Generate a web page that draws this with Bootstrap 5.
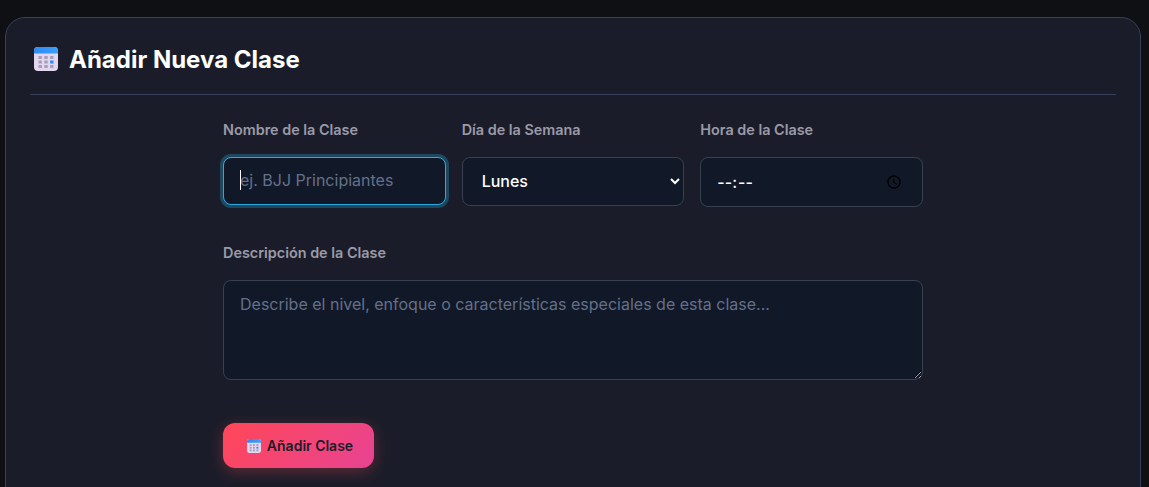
<!DOCTYPE html>
<html lang="es">
<head>
    <meta charset="UTF-8">
    <meta name="viewport" content="width=device-width, initial-scale=1.0">
    <title>Añadir Nueva Clase</title>
    <link href="https://cdn.jsdelivr.net/npm/bootstrap@5.3.0/dist/css/bootstrap.min.css" rel="stylesheet">
    <style>
        html, body { height: 487px; overflow: hidden; }
        body { background: #0f1014; font-family: "Inter", sans-serif; color: #fff; }
        .page-wrap { padding: 17px 8px 0 5px; height: 487px; overflow: hidden; }
        .panel {
            background: #1a1d29;
            border: 1px solid #374056;
            border-radius: 20px;
            padding: 24px 24px 0;
            height: 600px;
        }
        .panel-head {
            border-bottom: 1px solid #374056;
            height: 53px;
            padding-left: 4px;
            margin-bottom: 24px;
        }
        .panel-head h2 { font-size: 24px; font-weight: 700; line-height: 36px; margin: 0; color: #fff; }
        .cal-big { margin-top: 5px; margin-right: 3px; }
        .form-box { width: 700px; margin: 0 auto; }
        .field-grid { display: grid; grid-template-columns: repeat(3, 1fr); gap: 16px; align-items: start; }
        .field-label { display: block; font-size: 14.4px; font-weight: 600; line-height: 21px; color: #9a9aa8; margin-bottom: 17px; }
        .dark-input, .dark-input:focus {
            background-color: #111827;
            border: 1px solid #374151;
            border-radius: 8px;
            color: #fff;
            font-family: "Inter", sans-serif;
            font-size: 16px;
            padding: 11px 16px 13px;
            box-shadow: none;
        }
        .dark-input::placeholder { color: #64708b; opacity: 1; }
        .dark-input:focus { border-color: #29abe2; box-shadow: 0 0 0 3px rgba(41, 171, 226, .3); }
        .dark-text { height: 48px; }
        .dark-select { height: 49px; background-image: none; appearance: auto; font-weight: 500; padding-left: 15px; }
        .dark-time { height: 50px; font-weight: 500; padding: 12px 16px; }
        .dark-time::-webkit-datetime-edit-ampm-field { display: none; }
        textarea.dark-input { height: 100px; resize: vertical; }
        .field-wide { margin-top: 35px; }
        /* caret of the focused field, the headless shot does not paint it */
        .fake-caret { position: absolute; left: 17px; top: 13px; width: 1px; height: 20px; background: #fff; }
        .add-btn {
            display: inline-flex;
            align-items: center;
            gap: 6px;
            margin-top: 43px;
            height: 45px;
            width: 151px;
            justify-content: center;
            border: 0;
            border-radius: 12px;
            background: linear-gradient(135deg, #ff4757, #e84393);
            color: #1a1d29;
            font-size: 14px;
            font-weight: 600;
            padding-left: 9px;
            box-shadow: 0 4px 15px rgba(255, 71, 87, .3);
        }
    </style>
</head>
<body>
    <svg width="0" height="0" class="d-block">
        <defs>
            <linearGradient id="cal-top" x1="0" y1="0" x2="1" y2="0">
                <stop offset="0" stop-color="#2f8bf5"/>
                <stop offset="1" stop-color="#3aa0fb"/>
            </linearGradient>
            <symbol id="cal" viewBox="0 0 24 24">
                <rect x="0" y="0" width="24" height="24" rx="4" fill="#e3d6f0"/>
                <path d="M0 6.5V4A4 4 0 0 1 4 0h16a4 4 0 0 1 4 4v2.5z" fill="url(#cal-top)"/>
                <g fill="#a79fb8">
                    <rect x="4.5" y="9" width="3.4" height="3"/><rect x="10.3" y="9" width="3.4" height="3"/><rect x="16.1" y="9" width="3.4" height="3"/>
                    <rect x="4.5" y="13.5" width="3.4" height="3"/><rect x="10.3" y="13.5" width="3.4" height="3"/>
                    <rect x="4.5" y="18" width="3.4" height="3"/><rect x="10.3" y="18" width="3.4" height="3"/><rect x="16.1" y="18" width="3.4" height="3"/>
                </g>
                <rect x="16.1" y="13.5" width="3.4" height="3" fill="#2f8bf5"/>
            </symbol>
        </defs>
    </svg>

    <div class="page-wrap">
        <div class="panel">
            <div class="panel-head d-flex align-items-start gap-2">
                <svg width="24" height="24" class="flex-shrink-0 cal-big" aria-hidden="true"><use href="#cal"/></svg>
                <h2>Añadir Nueva Clase</h2>
            </div>

            <form class="form-box">
                <div class="field-grid">
                    <div>
                        <label class="field-label" for="nombre">Nombre de la Clase</label>
                        <div class="position-relative">
                            <input id="nombre" type="text" class="form-control dark-input dark-text" placeholder="ej. BJJ Principiantes" autofocus>
                            <span class="fake-caret"></span>
                        </div>
                    </div>
                    <div>
                        <label class="field-label" for="dia">Día de la Semana</label>
                        <select id="dia" class="form-select dark-input dark-select">
                            <option selected>Lunes</option>
                            <option>Martes</option>
                            <option>Miércoles</option>
                            <option>Jueves</option>
                            <option>Viernes</option>
                            <option>Sábado</option>
                            <option>Domingo</option>
                        </select>
                    </div>
                    <div>
                        <label class="field-label" for="hora">Hora de la Clase</label>
                        <input id="hora" type="time" class="form-control dark-input dark-time">
                    </div>
                </div>

                <div class="field-wide">
                    <label class="field-label" for="descripcion">Descripción de la Clase</label>
                    <textarea id="descripcion" class="form-control dark-input" placeholder="Describe el nivel, enfoque o características especiales de esta clase..."></textarea>
                </div>

                <button type="submit" class="add-btn">
                    <svg width="14" height="14" aria-hidden="true"><use href="#cal"/></svg>
                    Añadir Clase
                </button>
            </form>
        </div>
    </div>

    <script src="https://cdn.jsdelivr.net/npm/bootstrap@5.3.0/dist/js/bootstrap.bundle.min.js"></script>
</body>
</html>
